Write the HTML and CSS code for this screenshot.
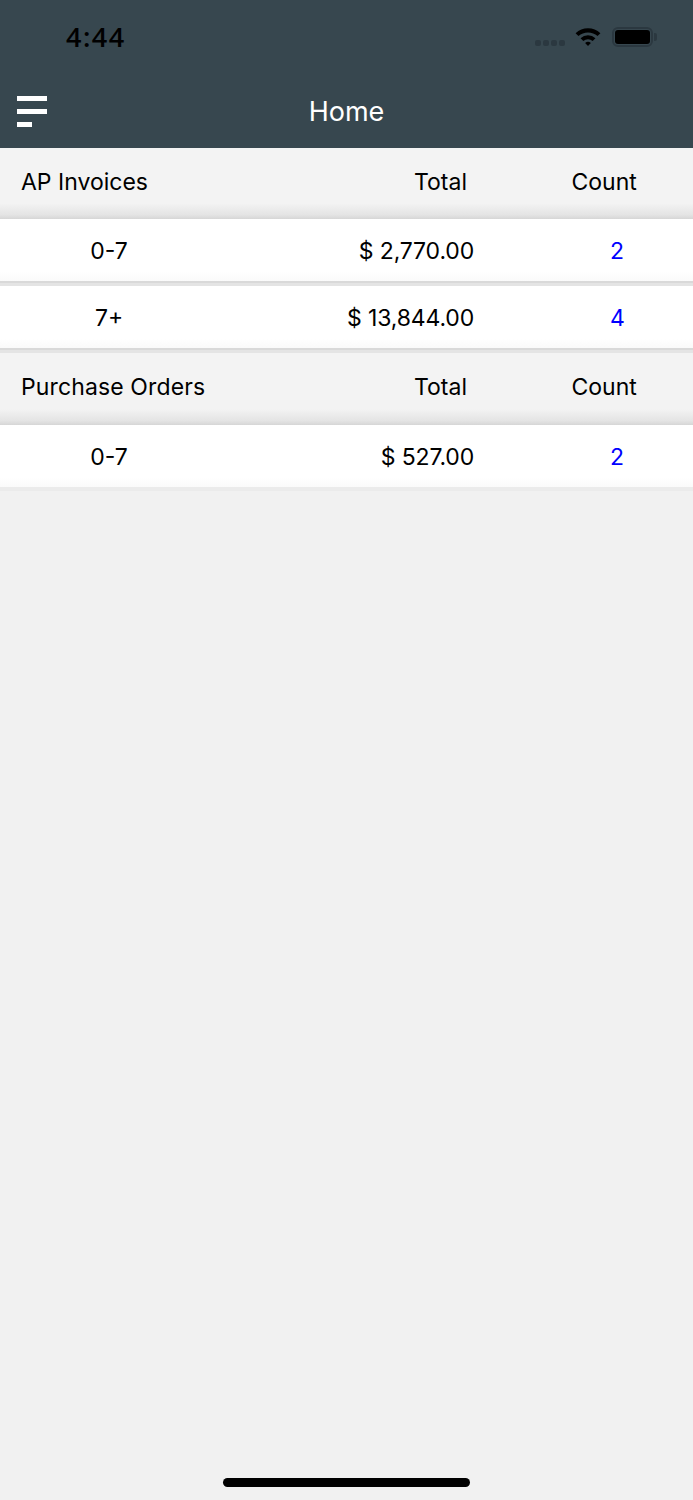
FILE: index.html
```html
<!DOCTYPE html>
<html lang="en">
<head>
  <meta charset="UTF-8" />
  <title>Home</title>
  <link rel="stylesheet" href="styles.css">
</head>
<body>
  <div class="app">
    <header class="topbar">
      <div class="statusbar">
        <span class="clock">4:44</span>
        <div class="status-icons">
          <div class="signal"><i></i><i></i><i></i><i></i></div>
          <svg class="wifi" width="28" height="21" viewBox="0 0 28 22">
            <path d="M1 7.5 A19 19 0 0 1 27 7.5 L24 10.6 A15 15 0 0 0 4 10.6 Z" fill="#000"/>
            <path d="M6.2 12.8 A11.5 11.5 0 0 1 21.8 12.8 L18.9 15.8 A7.5 7.5 0 0 0 9.1 15.8 Z" fill="#000"/>
            <path d="M11 17.8 A4.4 4.4 0 0 1 17 17.8 L14 21 Z" fill="#000"/>
          </svg>
          <div class="battery"><div class="battery-body"><div class="battery-fill"></div></div><div class="battery-cap"></div></div>
        </div>
      </div>
      <div class="navbar">
        <div class="menu-icon"><i></i><i></i><i class="short"></i></div>
        <h1>Home</h1>
      </div>
    </header>

    <!-- AP invoices -->
    <div class="section-head">
      <span class="col-name">AP Invoices</span>
      <span class="col-total">Total</span>
      <span class="col-count">Count</span>
    </div>
    <div class="row">
      <span class="col-range">0-7</span>
      <span class="col-amount">$ 2,770.00</span>
      <span class="col-link">2</span>
    </div>
    <div class="row">
      <span class="col-range">7+</span>
      <span class="col-amount">$ 13,844.00</span>
      <span class="col-link">4</span>
    </div>

    <!-- Purchase orders -->
    <div class="section-head">
      <span class="col-name">Purchase Orders</span>
      <span class="col-total">Total</span>
      <span class="col-count">Count</span>
    </div>
    <div class="row last">
      <span class="col-range">0-7</span>
      <span class="col-amount">$ 527.00</span>
      <span class="col-link">2</span>
    </div>

    <div class="home-bar"></div>
  </div>
</body>
</html>
```

FILE: styles.css
```css
:root {
  --bar: #37474f;
  --bg: #f1f1f1;
  --link: #0000ff;
}

* {
  box-sizing: border-box;
}

body {
  margin: 0;
  font-family: Inter, "Liberation Sans", sans-serif;
  background: var(--bg);
  color: #000;
}

.app {
  width: 693px;
  height: 1500px;
  position: relative;
  overflow: hidden;
  background: var(--bg);
}

/* top bar */
.topbar {
  height: 148px;
  background: var(--bar);
  display: flex;
  flex-direction: column;
}

.statusbar {
  height: 74px;
  display: flex;
  justify-content: space-between;
  align-items: center;
  padding: 0 36px 2px 66px;
}

.clock {
  font-family: "Open Sans", sans-serif;
  font-size: 27px;
  font-weight: 600;
  letter-spacing: 1.5px;
  color: #000;
}

.status-icons {
  display: flex;
  align-items: center;
}

.signal {
  display: flex;
  gap: 2px;
  margin: 14px 9px 0 0;
}

.signal i {
  width: 6px;
  height: 6px;
  border-radius: 2px;
  background: #2b3840;
}

.wifi {
  margin-right: 10px;
}

.battery {
  display: flex;
  align-items: center;
  margin-top: 2px;
}

.battery-body {
  width: 41px;
  height: 20px;
  border: 2px solid #2b3840;
  border-radius: 6px;
  padding: 1px;
}

.battery-fill {
  height: 100%;
  background: #000;
  border-radius: 3px;
}

.battery-cap {
  width: 3px;
  height: 8px;
  margin-left: 1px;
  background: #2b3840;
  border-radius: 0 2px 2px 0;
}

.navbar {
  flex: 1;
  display: flex;
  align-items: center;
  justify-content: center;
  position: relative;
}

.navbar h1 {
  margin: 0;
  font-size: 27px;
  font-weight: 400;
  color: #fff;
}

.menu-icon {
  position: absolute;
  left: 17px;
  top: 22px;
  width: 30px;
  display: flex;
  flex-direction: column;
  gap: 8px;
}

.menu-icon i {
  height: 5px;
  background: #fff;
}

.menu-icon i.short {
  width: 15px;
}

/* table rows */
.section-head,
.row {
  display: grid;
  grid-template-columns: 218px 256px 1fr;
  align-items: center;
  font-size: 23px;
}

.section-head {
  height: 71px;
  padding-bottom: 4px;
  background: linear-gradient(#f3f3f3 78%, #e4e4e4 94%, #d6d6d6);
}

.row + .section-head {
  height: 72px;
}

.row {
  height: 62px;
  padding-top: 2px;
  margin-bottom: 5px;
  background: linear-gradient(#fff 85%, #fafafa);
  box-shadow: 0 2px 0 #d9d9d9, 0 5px 0 #e4e4e4;
}

.row.last {
  box-shadow: 0 4px 0 #ebebeb;
}

.col-name {
  padding-left: 21px;
  white-space: nowrap;
}

.row + .section-head .col-name {
  letter-spacing: 0.12px;
}

.col-total {
  text-align: right;
  padding-right: 7px;
}

.col-count {
  padding-left: 97.5px;
}

.col-range {
  text-align: center;
}

.col-amount {
  text-align: right;
  letter-spacing: -0.15px;
}

.col-link {
  color: var(--link);
  padding-left: 136px;
}

.home-bar {
  position: absolute;
  left: 223px;
  bottom: 13px;
  width: 247px;
  height: 9px;
  border-radius: 5px;
  background: #000;
}
```
